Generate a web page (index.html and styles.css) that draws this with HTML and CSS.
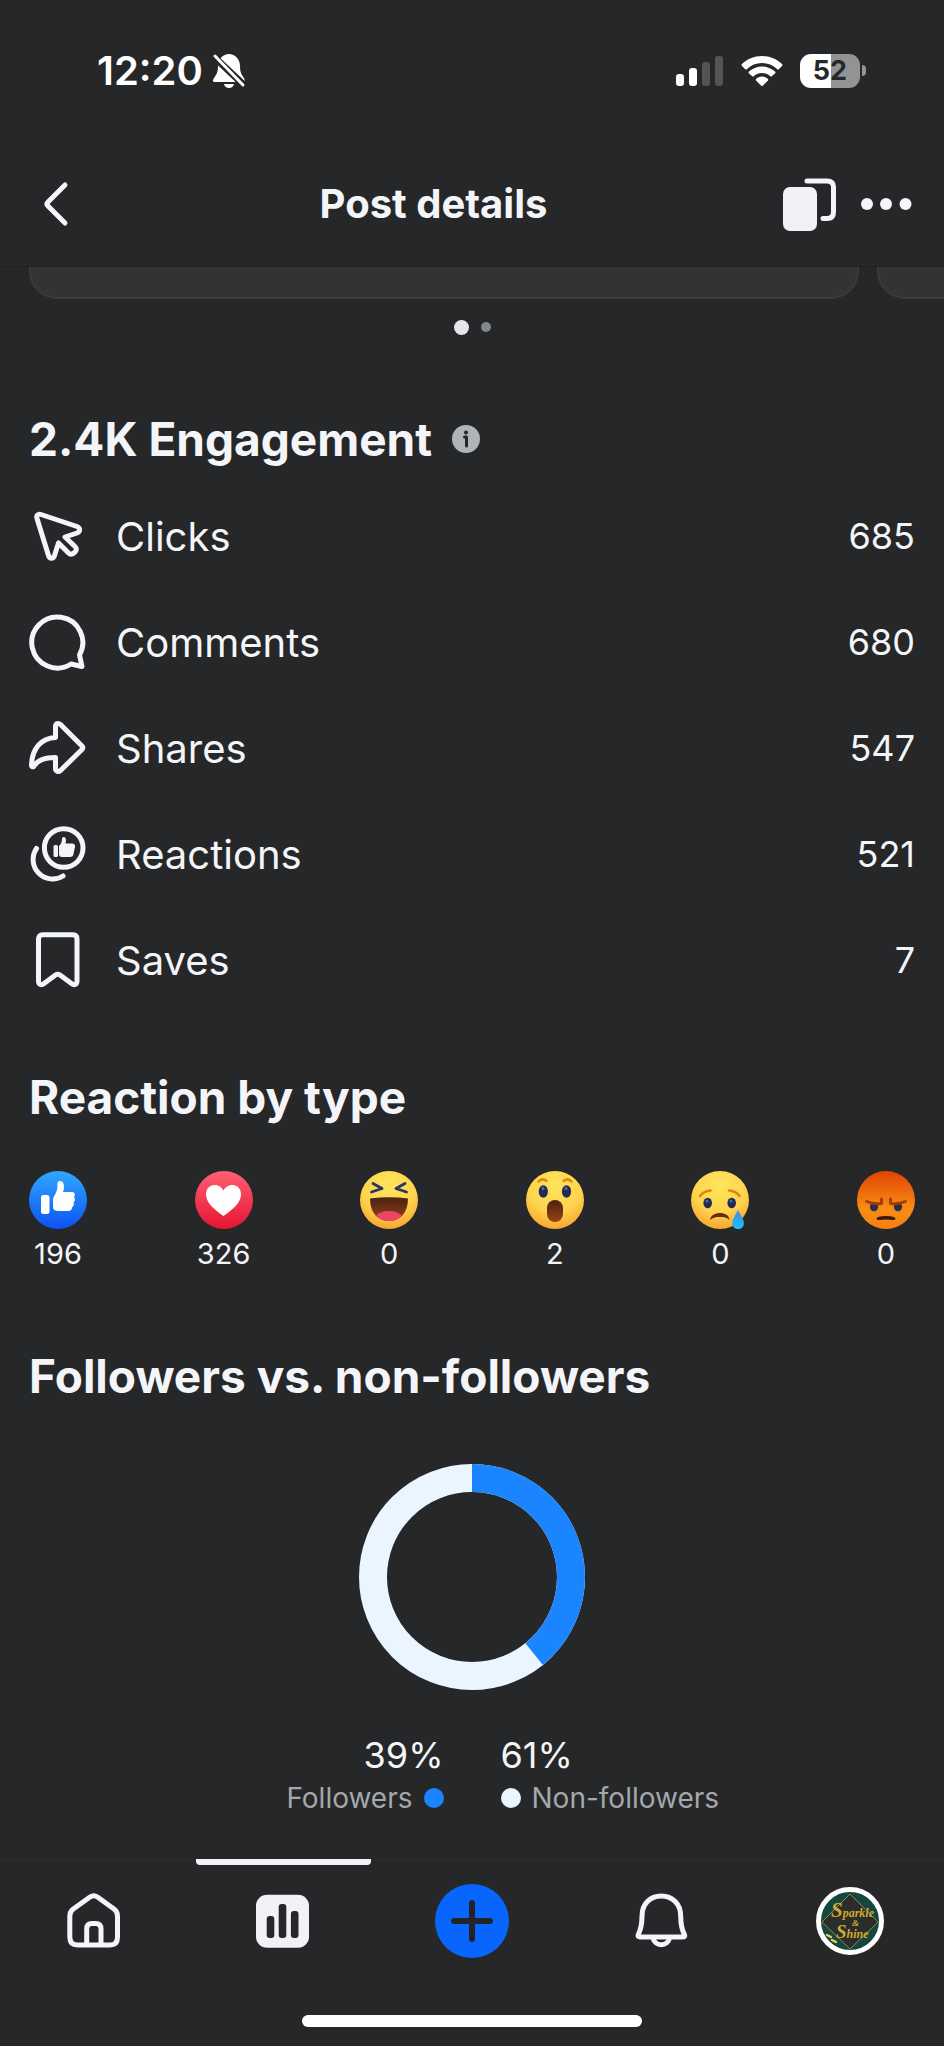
FILE: index.html
```html
<!DOCTYPE html>
<html lang="en">
<head>
    <meta charset="UTF-8">
    <meta name="viewport" content="width=device-width, initial-scale=1.0">
    <title>Post details</title>
    <link rel="stylesheet" href="styles.css">
</head>
<body>
    <header class="top">
        <div class="status-bar">
            <div class="status-left">
                <span class="time">12:20</span>
                <svg width="34" height="36" viewBox="0 0 34 36">
                    <path fill="#fff" d="M17 1C11 1 6 6 6 13C6 20 4 22 2 25C0 28 1 29 3 29H30C33 29 33 28 32 25C30 22 28 20 28 13C28 6 23 1 17 1Z"/>
                    <path fill="#fff" d="M12 31H22Q21 35 17 35Q13 35 12 31Z"/>
                    <path stroke="#252728" stroke-width="7" d="M0 2L34 34"/>
                    <path stroke="#fff" stroke-width="3" stroke-linecap="round" d="M3 3L31 32"/>
                </svg>
            </div>
            <div class="status-right">
                <svg width="48" height="32" viewBox="0 0 48 32">
                    <rect x="0" y="19" width="8" height="12" rx="3" fill="#fff"/>
                    <rect x="13" y="13" width="8" height="18" rx="3" fill="#fff"/>
                    <rect x="26" y="7" width="8" height="24" rx="3" fill="#535456"/>
                    <rect x="39" y="1" width="8" height="30" rx="3" fill="#535456"/>
                </svg>
                <svg width="42" height="32" viewBox="0 0 42 32" fill="#fff">
                    <path d="M21 1C13 1 6 4 1 9Q0 10 1 11L4 14Q5 15 6 14C10 10 15 8 21 8C27 8 32 10 36 14Q37 15 38 14L41 11Q42 10 41 9C36 4 29 1 21 1Z"/>
                    <path d="M21 11.500C16 11.500 11.500 13.500 8 16.500Q7 17.500 8 18.500L11 21Q12 22 13 21C15 19 18 18 21 18C24 18 27 19 29 21Q30 22 31 21L34 18.500Q35 17.500 34 16.500C30.500 13.500 26 11.500 21 11.500Z"/>
                    <path d="M21 21.500C18.500 21.500 16.500 22.500 15 24Q14.500 25 15 25.500L20 30.500Q21 31.500 22 30.500L27 25.500Q27.500 25 27 24C25.500 22.500 23.500 21.500 21 21.500Z"/>
                </svg>
                <div class="battery-wrap">
                    <span class="battery">52</span>
                    <span class="battery-cap"></span>
                </div>
            </div>
        </div>
        <div class="nav-bar">
            <button class="icon-btn" type="button" aria-label="Back">
                <svg width="58" height="58" viewBox="0 0 58 58" class="line"><path d="M36 10L19 27Q17 29 19 31L36 48"/></svg>
            </button>
            <h1>Post details</h1>
            <div class="nav-actions">
                <button class="icon-btn" type="button" aria-label="Switch post">
                    <svg width="58" height="58" viewBox="0 0 58 58">
                        <rect x="3" y="12" width="34" height="44" rx="7" fill="#f1f2f6"/>
                        <path class="line" d="M27 6H47Q53.500 6 53.500 12V37Q53.500 43.500 47 43.500H43"/>
                    </svg>
                </button>
                <button class="icon-btn" type="button" aria-label="More options">
                    <svg width="54" height="58" viewBox="0 0 54 58" fill="#f4f5f8">
                        <circle cx="6" cy="29" r="6"/><circle cx="25" cy="29" r="6"/><circle cx="44.500" cy="29" r="6"/>
                    </svg>
                </button>
            </div>
        </div>
    </header>

    <main>
        <div class="carousel">
            <div class="card"></div>
            <div class="card"></div>
        </div>
        <div class="dots"><span class="dot active"></span><span class="dot"></span></div>

        <section class="engagement">
            <div class="heading">
                <h2>2.4K Engagement</h2>
                <button class="icon-btn" type="button" aria-label="About engagement">
                    <svg width="28" height="28" viewBox="0 0 28 28">
                        <circle cx="14" cy="14" r="14" fill="#b0b3b8"/>
                        <circle cx="14" cy="7.500" r="2" fill="#252728"/>
                        <path d="M12.500 12H14.500V21" fill="none" stroke="#252728" stroke-width="3" stroke-linecap="round" stroke-linejoin="round"/>
                    </svg>
                </button>
            </div>
            <ul class="stats">
                <li>
                    <svg class="line" width="58" height="58" viewBox="0 0 58 58"><path d="M8 11.500C7 8.500 9 6.500 12 7.500L48 19.500C51.500 20.800 51.500 24.500 48 26L36 30L46 39.500Q49 42.500 45.500 45.500Q42 48.500 39.500 46L29.500 36L25.500 48.500C24.500 52 20.500 52 19.500 48.500Z"/></svg>
                    <span class="label">Clicks</span>
                    <span class="value">685</span>
                </li>
                <li>
                    <svg class="line" width="58" height="58" viewBox="0 0 58 58"><path d="M50.500 42A25.500 25.500 0 1 0 42 51L53 53.500Z"/></svg>
                    <span class="label">Comments</span>
                    <span class="value">680</span>
                </li>
                <li>
                    <svg class="line" width="58" height="58" viewBox="0 0 58 58"><path d="M26.500 7.500C26.500 4.500 29 3.500 31.500 5.500L53 27Q54.500 28.700 53 30.500L31.500 51.500C29 53.500 26.500 52 26.500 49.500V38.500C16 38.500 9 41 5.500 46.500C4.500 48.500 2.500 48 2.500 46C3 30 12 19 26.500 18.500Z"/></svg>
                    <span class="label">Shares</span>
                    <span class="value">547</span>
                </li>
                <li>
                    <svg width="58" height="58" viewBox="0 0 58 58">
                        <g class="line"><circle cx="34.700" cy="23" r="19.300"/><path d="M7.500 23.500A19.500 19.500 0 0 0 34 51"/></g>
                        <g fill="#f4f5f8"><rect x="24.500" y="20" width="4.500" height="12" rx="1.500"/><path d="M30 21C32 19 33 17 33 14Q33 12 34.500 12Q37 12 37 15.500L36.500 18.500H43Q46.500 18.500 46 22L44.500 29Q44 32 41 32H33Q30 32 30 29Z"/></g>
                    </svg>
                    <span class="label">Reactions</span>
                    <span class="value">521</span>
                </li>
                <li>
                    <svg class="line" width="58" height="58" viewBox="0 0 58 58"><path d="M9.500 8Q9.500 3.800 13.500 3.800H44Q48 3.800 48 8V50C48 54 45 54.500 42.500 52.500L31 44Q28.700 42.500 26.500 44L15 52.500C12.500 54.500 9.500 54 9.500 50Z"/></svg>
                    <span class="label">Saves</span>
                    <span class="value">7</span>
                </li>
            </ul>
        </section>

        <section class="reactions">
            <h2>Reaction by type</h2>
            <ul class="reaction-list">
                <li>
                    <svg width="58" height="58" viewBox="0 0 58 58" role="img" aria-label="Like">
                        <defs>
                            <linearGradient id="blue" x2="0" y2="1"><stop offset="0" stop-color="#2fa8ff"/><stop offset="1" stop-color="#0d52f2"/></linearGradient>
                            <linearGradient id="red" x2="0" y2="1"><stop offset="0" stop-color="#ff6073"/><stop offset="1" stop-color="#e61432"/></linearGradient>
                            <radialGradient id="yellow" cx=".5" cy=".25" r=".78"><stop offset="0" stop-color="#ffe45c"/><stop offset=".6" stop-color="#ffd34d"/><stop offset="1" stop-color="#f7a12f"/></radialGradient>
                            <linearGradient id="orange" x2="0" y2="1"><stop offset="0" stop-color="#e04302"/><stop offset=".65" stop-color="#f98c15"/><stop offset="1" stop-color="#f4800f"/></linearGradient>
                            <linearGradient id="mouth" x2="0" y2="1"><stop offset="0" stop-color="#482314"/><stop offset="1" stop-color="#9a4111"/></linearGradient>
                            <linearGradient id="tear" x2="0" y2="1"><stop offset="0" stop-color="#3f8fe0"/><stop offset="1" stop-color="#1cc0ff"/></linearGradient>
                        </defs>
                        <circle cx="29" cy="29" r="29" fill="url(#blue)"/>
                        <rect x="12" y="24" width="8.500" height="19" rx="2.500" fill="#fff"/>
                        <path fill="#fff" d="M24 29C24 25 28.500 22 28.500 15C28 11.500 29 10 31 10C34 10 35 13 35 16C35 18 34.500 19.500 34 21H43C46 21 46.500 24 45 26C46.500 28 46 30 44.500 31.500C45.500 33.500 44.500 35.500 43 36.500C43 39 41.500 40 39 40H29C26 40 24 38.500 24 36Z"/>
                    </svg>
                    <span>196</span>
                </li>
                <li>
                    <svg width="58" height="58" viewBox="0 0 58 58" role="img" aria-label="Love">
                        <circle cx="29" cy="29" r="29" fill="url(#red)"/>
                        <path fill="#fff" d="M28.500 45C20 39 11 32 11 23.500C11 17.500 15 14 19.500 14C24 14 27 16.500 28.500 19.500C30 16.500 33 14 37.500 14C42 14 46 17.500 46 23.500C46 32 37 39 28.500 45Z"/>
                    </svg>
                    <span>326</span>
                </li>
                <li>
                    <svg width="58" height="58" viewBox="0 0 58 58" role="img" aria-label="Haha">
                        <circle cx="29" cy="29" r="29" fill="url(#yellow)"/>
                        <path fill="none" stroke="#2b3462" stroke-width="2.800" stroke-linecap="round" stroke-linejoin="round" d="M13 12.500L22 17.500L11.500 21M45 12.500L36 17.500L46.500 21"/>
                        <path fill="url(#mouth)" d="M10 27.500Q29 25 48 27.500C48 42 40 50 29 50C18 50 10 42 10 27.500Z"/>
                        <path fill="#ec4466" d="M16 45Q20 40 29 40Q38 40 42 45Q36 50 29 50Q22 50 16 45Z"/>
                    </svg>
                    <span>0</span>
                </li>
                <li>
                    <svg width="58" height="58" viewBox="0 0 58 58" role="img" aria-label="Wow">
                        <circle cx="29" cy="29" r="29" fill="url(#yellow)"/>
                        <path fill="none" stroke="#e28413" stroke-width="2.500" stroke-linecap="round" d="M12.500 10.500Q16 6.500 20.500 10M37.500 10Q42 6.500 45.500 10.500"/>
                        <g fill="#212b55"><ellipse cx="17.300" cy="20.500" rx="4.600" ry="6.200"/><ellipse cx="40.500" cy="20.500" rx="4.600" ry="6.200"/></g>
                        <g fill="#4d6aa0"><ellipse cx="17" cy="17.500" rx="1.500" ry="1.800"/><ellipse cx="40" cy="17.500" rx="1.500" ry="1.800"/></g>
                        <rect x="21" y="29" width="16" height="22" rx="8" fill="url(#mouth)"/>
                    </svg>
                    <span>2</span>
                </li>
                <li>
                    <svg width="58" height="58" viewBox="0 0 58 58" role="img" aria-label="Sad">
                        <circle cx="29" cy="29" r="29" fill="url(#yellow)"/>
                        <path fill="none" stroke="#e28413" stroke-width="2.500" stroke-linecap="round" d="M9 25Q13 20 19.500 19.500M38 19.500Q45 20 48.500 25"/>
                        <g fill="#212b55"><ellipse cx="16.700" cy="32" rx="4.300" ry="5.200"/><ellipse cx="40.700" cy="32" rx="4.300" ry="5.200"/></g>
                        <g fill="#4d6aa0"><circle cx="16" cy="30" r="1.500"/><circle cx="40" cy="30" r="1.500"/></g>
                        <path fill="#6b2c10" d="M19 49C20 44 24 42 29 42C34 42 38 44 38.500 49C36 46.500 33 46 29 46C25 46 22 46.500 19 49Z"/>
                        <path fill="url(#tear)" d="M47 39C44.500 44 41.300 48 41.300 52.500A5.800 5.800 0 0 0 52.900 52.500C53 48 49.500 44 47 39Z"/>
                    </svg>
                    <span>0</span>
                </li>
                <li>
                    <svg width="58" height="58" viewBox="0 0 58 58" role="img" aria-label="Angry">
                        <circle cx="29" cy="29" r="29" fill="url(#orange)"/>
                        <g fill="#2a2f52"><circle cx="17" cy="36" r="4.200"/><circle cx="41" cy="36" r="4.200"/></g>
                        <path fill="none" stroke="#a33a08" stroke-width="2.800" stroke-linecap="round" stroke-linejoin="round" d="M9.500 30.500Q17 33.500 24.500 32.500V28M48.500 30.500Q41 33.500 33.500 32.500V28"/>
                        <path fill="#3d170b" d="M19.500 47.500Q20 45 29 45Q38 45 38.500 47.500Q38 49.500 36 49Q29 48 22 49Q20 49.500 19.500 47.500Z"/>
                    </svg>
                    <span>0</span>
                </li>
            </ul>
        </section>

        <section class="followers">
            <h2>Followers vs. non-followers</h2>
            <svg class="donut" width="226" height="226" viewBox="0 0 226 226" role="img" aria-label="39% followers, 61% non-followers">
                <circle cx="113" cy="113" r="99" fill="none" stroke="#ebf5ff" stroke-width="28"/>
                <circle cx="113" cy="113" r="99" fill="none" stroke="#1b85ff" stroke-width="28" pathLength="100" stroke-dasharray="39.200 60.800" transform="rotate(-90 113 113)"/>
            </svg>
            <div class="legend">
                <div class="legend-item left">
                    <span class="percent">39%</span>
                    <span class="name">Followers <i class="swatch blue"></i></span>
                </div>
                <div class="legend-item">
                    <span class="percent">61%</span>
                    <span class="name"><i class="swatch"></i> Non-followers</span>
                </div>
            </div>
        </section>
    </main>

    <footer>
        <nav class="tabs">
            <a href="#" aria-label="Home">
                <svg class="line" width="58" height="58" viewBox="0 0 58 58"><path d="M25 5Q28.700 2.500 32.500 5L49 17Q52.500 19.500 52.500 24V45Q52.500 53 45 53H12.500Q4.800 53 4.800 45V24Q4.800 19.500 8.300 17ZM21.700 53V37Q21.700 31.500 27 31.500H30.500Q36 31.500 36 37V53"/></svg>
            </a>
            <a href="#" class="active" aria-label="Insights">
                <svg width="58" height="58" viewBox="0 0 58 58">
                    <rect x="2" y="2.700" width="53" height="53" rx="11" fill="#f1f2f6"/>
                    <g fill="#252728"><rect x="12.700" y="24" width="7.600" height="22" rx="3"/><rect x="24.700" y="12" width="7.600" height="34" rx="3"/><rect x="36.900" y="19" width="7.600" height="27" rx="3"/></g>
                </svg>
            </a>
            <a href="#" aria-label="Create">
                <svg width="74" height="74" viewBox="0 0 74 74">
                    <circle cx="37" cy="37" r="37" fill="#0866ff"/>
                    <path d="M19 37H55M37 19V55" stroke="#222426" stroke-width="6" stroke-linecap="round"/>
                </svg>
            </a>
            <a href="#" aria-label="Notifications">
                <svg class="line" width="58" height="58" viewBox="0 0 58 58"><path d="M29.300 4C18 4 10 12 10 24C10 34 8.500 38 6.300 42.500Q5.300 45 8 45H51Q53.500 45 52.400 42.500C50 38 48.700 34 48.700 24C48.700 12 40.500 4 29.300 4ZM21 46A8.500 8.500 0 0 0 37.600 46"/></svg>
            </a>
            <a href="#" aria-label="Profile">
                <svg width="68" height="68" viewBox="0 0 68 68">
                    <circle cx="34" cy="34" r="31.500" fill="#17463f" stroke="#fff" stroke-width="5"/>
                    <path d="M34 7L62 35L34 62L6 35Z" fill="#292d2b" stroke="#8f8a4c" stroke-width="1"/>
                    <g class="logo-text" fill="#d0a92c">
                        <text x="15" y="30" font-size="12"><tspan font-size="21">S</tspan>parkle</text>
                        <text x="36" y="39" font-size="9">&amp;</text>
                        <text x="20" y="51" font-size="12"><tspan font-size="19">S</tspan>hine</text>
                    </g>
                    <path d="M11 48l4 2M16 53l4 2" stroke="#e2d060" stroke-width="2.500" stroke-linecap="round"/>
                </svg>
            </a>
        </nav>
        <div class="home-indicator"></div>
    </footer>
</body>
</html>
```
FILE: styles.css
```css
* {
    box-sizing: border-box;
}

body {
    margin: 0;
    min-height: 100vh;
    display: flex;
    flex-direction: column;
    background-color: #252728;
    color: #f4f5f8;
    font-family: Inter, "Liberation Sans", sans-serif;
}

h1, h2, ul {
    margin: 0;
    padding: 0;
}

ul {
    list-style: none;
}

svg {
    display: block;
    flex: none;
}

h2 {
    font-size: 46px;
    line-height: 56px;
    font-weight: 700;
}

/* Outline icons */
.line {
    fill: none;
    stroke: #f4f5f8;
    stroke-width: 5px;
    stroke-linecap: round;
    stroke-linejoin: round;
}

.icon-btn {
    padding: 0;
    border: none;
    background: none;
    cursor: pointer;
}

/* Top area */
.top {
    border-bottom: 1px solid #202123;
}

.status-bar {
    display: flex;
    justify-content: space-between;
    align-items: center;
    height: 141px;
    padding: 0 78px 0 97px;
    color: #fff;
}

.status-left,
.status-right {
    display: flex;
    align-items: center;
}

.status-left {
    gap: 9px;
}

.status-right {
    gap: 17px;
}

.time {
    font-size: 40px;
    font-weight: 600;
}

.battery-wrap {
    display: flex;
    align-items: center;
    gap: 2px;
}

.battery {
    width: 60px;
    border-radius: 11px;
    background: linear-gradient(to right, #fff 52%, #929394 52%);
    color: #252728;
    font-size: 27px;
    line-height: 34px;
    font-weight: 700;
    text-align: center;
}

.battery-cap {
    width: 4px;
    height: 11px;
    border-radius: 0 4px 4px 0;
    background: #929394;
}

.nav-bar {
    display: flex;
    align-items: center;
    height: 125px;
    padding: 0 29px;
}

.nav-bar h1 {
    flex: 1;
    font-size: 40px;
    font-weight: 700;
    text-align: center;
}

.nav-actions {
    display: flex;
    gap: 23px;
}

/* Cards scrolled under the header */
main {
    flex: 1;
}

.carousel {
    display: flex;
    gap: 18px;
    padding-left: 29px;
    overflow: hidden;
}

.card {
    flex: 0 0 calc(100% - 85px);
    height: 32px;
    border: 2px solid #3a3b3d;
    border-top: none;
    border-radius: 0 0 28px 28px;
    background: #333335;
}

.dots {
    display: flex;
    justify-content: center;
    align-items: center;
    gap: 12px;
    height: 56px;
}

.dot {
    width: 10px;
    height: 10px;
    border-radius: 50%;
    background: #84878b;
}

.dot.active {
    width: 15px;
    height: 15px;
    background: #e4e6eb;
}

section {
    padding: 0 29px;
}

/* Engagement */
.engagement {
    padding-top: 56px;
}

.heading {
    display: flex;
    align-items: center;
    gap: 20px;
    margin-bottom: 16px;
}

.stats li {
    display: flex;
    align-items: center;
    height: 106px;
}

.label {
    flex: 1;
    margin-left: 29px;
    font-size: 40px;
}

.value {
    font-size: 36px;
}

/* Reactions */
.reactions {
    padding-top: 56px;
}

.reaction-list {
    display: flex;
    justify-content: space-between;
    margin-top: 46px;
}

.reaction-list li {
    width: 58px;
    text-align: center;
    font-size: 29px;
    line-height: 36px;
}

.reaction-list svg {
    margin-bottom: 7px;
}

/* Followers */
.followers {
    padding-top: 76px;
    padding-bottom: 42px;
}

.donut {
    margin: 60px auto 43px;
}

.legend {
    display: grid;
    grid-template-columns: 1fr 1fr;
    gap: 57px;
}

.legend-item {
    display: flex;
    flex-direction: column;
    gap: 3px;
}

.legend-item.left {
    align-items: flex-end;
}

.percent {
    font-size: 36px;
    line-height: 44px;
}

.name {
    display: flex;
    align-items: center;
    gap: 11px;
    color: #a5a7aa;
    font-size: 28px;
    line-height: 36px;
}

.swatch {
    width: 20px;
    height: 20px;
    border-radius: 50%;
    background: #ebf5ff;
}

.swatch.blue {
    background: #1b85ff;
}

/* Bottom tabs */
footer {
    border-top: 1px solid #2c2d2f;
}

.tabs {
    display: grid;
    grid-template-columns: repeat(5, 1fr);
    height: 122px;
}

.tabs a {
    position: relative;
    display: flex;
    justify-content: center;
    align-items: center;
}

.tabs a.active::before {
    content: "";
    position: absolute;
    top: -1px;
    left: 7px;
    right: 7px;
    height: 6px;
    border-radius: 0 0 4px 4px;
    background: #f1f2f6;
}

.logo-text {
    font-family: "Liberation Serif", serif;
    font-style: italic;
    font-weight: 700;
}

.home-indicator {
    width: 36%;
    height: 12px;
    margin: 33px auto 19px;
    border-radius: 6px;
    background: #fff;
}
```
